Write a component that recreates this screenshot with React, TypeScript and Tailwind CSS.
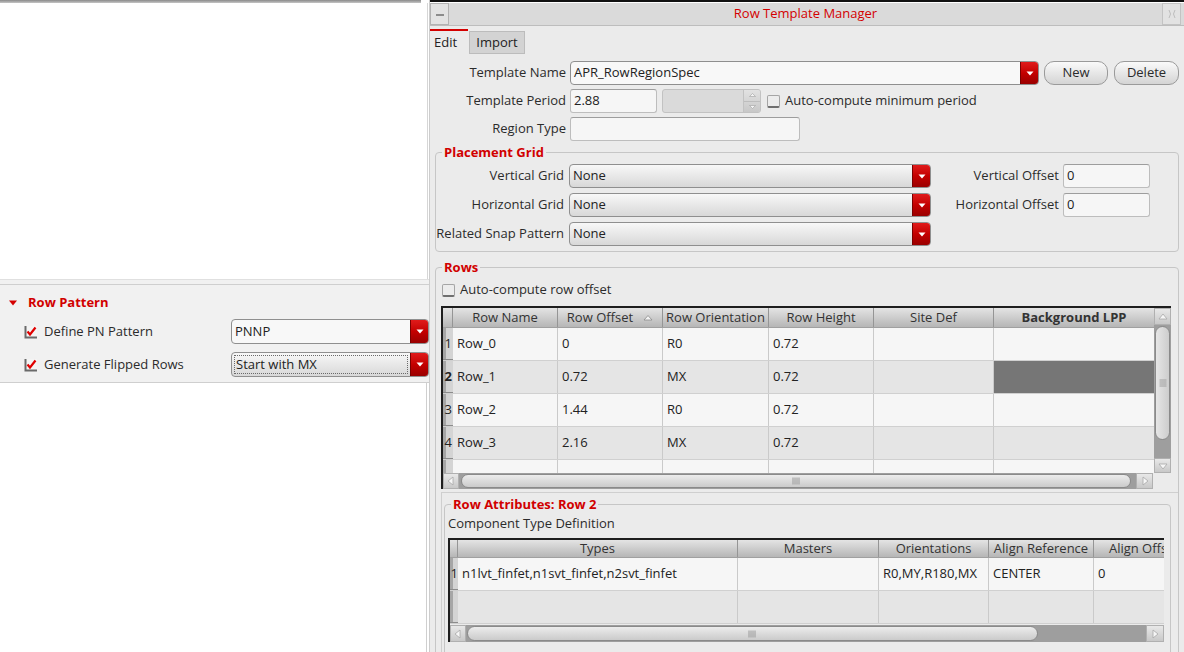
import React from "react";

function RedArrow() {
  return (
    <div className="w-[18px] shrink-0 flex items-center justify-center bg-linear-to-b from-[#e01a1a] via-[#c40000] to-[#9a0000] border-l border-[#7a0000]">
      <svg width="8" height="5" viewBox="0 0 8 5">
        <path d="M0.5 0.5 H7.5 L4 4.5Z" fill="#fff" />
      </svg>
    </div>
  );
}

function Combo({ className, value, gray, focus }: { className: string; value: string; gray?: boolean; focus?: boolean }) {
  return (
    <div
      className={
        "flex rounded-[4px] border border-[#8f8f8f] overflow-hidden shrink-0 " +
        (gray ? "bg-linear-to-b from-[#f8f8f8] to-[#d8d8d8] " : "bg-[#f8f8f8] ") +
        className
      }
    >
      {focus ? (
        <div className="flex-1 flex items-center m-[2px] border border-dotted border-[#6a6a6a] pl-[1px] text-[13px] text-[#222] whitespace-nowrap">
          {value}
        </div>
      ) : (
        <div className="flex-1 flex items-center pl-[3px] text-[13px] text-[#222] whitespace-nowrap">{value}</div>
      )}
      <RedArrow />
    </div>
  );
}

function Field({ className, value }: { className: string; value: string }) {
  return (
    <div
      className={
        "h-[24px] shrink-0 rounded-[3px] border border-[#bdbdbd] border-t-[#9d9d9d] bg-[#f6f6f6] flex items-center pl-[3px] text-[13px] text-[#222] " +
        className
      }
    >
      {value}
    </div>
  );
}

function RedCheck() {
  return (
    <svg width="14" height="14" viewBox="0 0 14 14" className="shrink-0">
      <rect x="1" y="1" width="12" height="12" fill="#f4f4f4" />
      <path d="M1.5 1 V12.5 H13" stroke="#6a6a6a" strokeWidth="2" fill="none" />
      <path d="M3.5 6.5 L6 9.5 L11.5 2.5" stroke="#e00000" strokeWidth="2.2" fill="none" />
    </svg>
  );
}

function EmptyCheck() {
  return (
    <div className="w-[13px] h-[13px] shrink-0 rounded-[2px] border border-[#a5a5a5] border-b-[#6f6f6f] border-b-2 bg-[#ececec]" />
  );
}

function ArrowBtn({ dir, className }: { dir: "up" | "down" | "left" | "right"; className: string }) {
  const d =
    dir === "up"
      ? "M2 8 L6 3 L10 8Z"
      : dir === "down"
      ? "M2 4 L6 9 L10 4Z"
      : dir === "left"
      ? "M8 2 L3 6 L8 10Z"
      : "M4 2 L9 6 L4 10Z";
  return (
    <div
      className={
        "shrink-0 flex items-center justify-center bg-linear-to-b from-[#e8e8e8] to-[#c8c8c8] border border-[#b0b0b0] " +
        className
      }
    >
      <svg width="12" height="12" viewBox="0 0 12 12">
        <path d={d} fill="#f6f6f6" stroke="#a8a8a8" strokeWidth="0.8" />
      </svg>
    </div>
  );
}

function GripV() {
  return (
    <svg width="9" height="8" viewBox="0 0 9 8">
      <path d="M1 0.5 V7.5 M3 0.5 V7.5 M5 0.5 V7.5 M7 0.5 V7.5" stroke="#9a9a9a" strokeWidth="1" />
    </svg>
  );
}

function GripH() {
  return (
    <svg width="8" height="9" viewBox="0 0 8 9">
      <path d="M0.5 1 H7.5 M0.5 3 H7.5 M0.5 5 H7.5 M0.5 7 H7.5" stroke="#a0a0a0" strokeWidth="1" />
    </svg>
  );
}

function HeadCell({ w, label, bold, sort, last }: { w: string; label: string; bold?: boolean; sort?: boolean; last?: boolean }) {
  return (
    <div
      className={
        "shrink-0 h-full flex items-center justify-center relative whitespace-nowrap overflow-hidden text-[13px] text-[#333] " +
        (last ? "" : "border-r border-[#959595] ") +
        (bold ? "font-bold text-[#1a1a1a] " : "") +
        w
      }
    >
      {label}
      {sort ? (
        <svg width="10" height="7" viewBox="0 0 10 7" className="ml-[10px]">
          <path d="M1 6 L5 1.5 L9 6Z" fill="#f2f2f2" stroke="#8a8a8a" strokeWidth="0.8" />
        </svg>
      ) : null}
    </div>
  );
}

const rowCols = [
  { w: "w-[105px]", label: "Row Name" },
  { w: "w-[105px]", label: "Row Offset", sort: true },
  { w: "w-[106px]", label: "Row Orientation" },
  { w: "w-[105px]", label: "Row Height" },
  { w: "w-[120px]", label: "Site Def" },
  { w: "w-[160px]", label: "Background LPP", bold: true },
];

const rowData = [
  ["Row_0", "0", "R0", "0.72", "", ""],
  ["Row_1", "0.72", "MX", "0.72", "", ""],
  ["Row_2", "1.44", "R0", "0.72", "", ""],
  ["Row_3", "2.16", "MX", "0.72", "", ""],
];

const attrCols = [
  { w: "w-[280px]", label: "Types" },
  { w: "w-[141px]", label: "Masters" },
  { w: "w-[110px]", label: "Orientations" },
  { w: "w-[105px]", label: "Align Reference" },
  { w: "w-[100px]", label: "Align Offset" },
];

const attrData = [
  ["n1lvt_finfet,n1svt_finfet,n2svt_finfet", "", "R0,MY,R180,MX", "CENTER", "0"],
  ["", "", "", "", ""],
];

function RowsTable() {
  return (
    <div className="w-[730px] ml-[5px] mt-[8px] border-t-2 border-l-2 border-[#1e1e1e] flex flex-col">
      <div className="flex">
        <div className="w-[711px] flex flex-col">
          <div className="h-[20px] shrink-0 flex bg-linear-to-b from-[#e4e4e4] to-[#b6b6b6] border-b border-[#a0a0a0]">
            <div className="w-[10px] shrink-0 border-r border-[#959595]" />
            {rowCols.map((c, i) => (
              <HeadCell key={i} w={c.w} label={c.label} bold={c.bold} sort={c.sort} last={i === rowCols.length - 1} />
            ))}
          </div>
          {rowData.map((r, ri) => (
            <div
              key={ri}
              className={
                "h-[33px] shrink-0 flex border-b border-[#d0d0d0] " + (ri % 2 === 1 ? "bg-[#e5e5e5]" : "bg-[#f6f6f6]")
              }
            >
              <div
                className={
                  "w-[10px] shrink-0 flex items-center justify-end pr-[1px] text-[13px] text-[#222] bg-linear-to-r from-[#a6a6a6] from-30% to-[#d4d4d4] to-30% border-b border-[#8c8c8c] " +
                  (ri === 1 ? "font-bold" : "")
                }
              >
                {ri + 1}
              </div>
              {rowCols.map((c, ci) => (
                <div
                  key={ci}
                  className={
                    "shrink-0 flex items-center pl-[4px] text-[13px] text-[#222] " +
                    (ci === rowCols.length - 1 ? "" : "border-r border-[#cacaca] ") +
                    (ri === 1 && ci === 5 ? "bg-[#767676] " : "") +
                    c.w
                  }
                >
                  {r[ci]}
                </div>
              ))}
            </div>
          ))}
          <div className="h-[13px] shrink-0 flex bg-[#f6f6f6]">
            <div className="w-[10px] shrink-0 bg-linear-to-r from-[#a6a6a6] from-30% to-[#d4d4d4] to-30%" />
            {rowCols.map((c, ci) => (
              <div
                key={ci}
                className={"shrink-0 " + (ci === rowCols.length - 1 ? "" : "border-r border-[#cacaca] ") + c.w}
              />
            ))}
          </div>
        </div>
        <div className="w-[17px] h-[165px] flex flex-col">
          <ArrowBtn dir="up" className="h-[17px] w-[17px]" />
          <div className="flex-1 bg-[#9e9e9e] px-[1px] pt-[1px]">
            <div className="h-[114px] rounded-full border border-[#8a8a8a] bg-linear-to-r from-[#e6e6e6] to-[#cdcdcd] flex items-center justify-center">
              <GripH />
            </div>
          </div>
          <ArrowBtn dir="down" className="h-[15px] w-[17px]" />
        </div>
      </div>
      <div className="h-[16px] shrink-0 flex">
        <ArrowBtn dir="left" className="w-[16px] h-[16px]" />
        <div className="w-[677px] shrink-0 bg-[#9e9e9e] py-[1px] pl-[2px]">
          <div className="w-[670px] h-full rounded-full border border-[#8a8a8a] bg-linear-to-b from-[#ececec] to-[#cbcbcb] flex items-center justify-center">
            <GripV />
          </div>
        </div>
        <ArrowBtn dir="right" className="w-[17px] h-[16px]" />
        <div className="w-[18px] shrink-0 bg-[#ebebeb]" />
      </div>
    </div>
  );
}

function AttrTable() {
  return (
    <div className="w-[716px] mt-[6px] ml-[3px] border-t-2 border-l-2 border-[#1e1e1e] flex flex-col overflow-hidden">
      <div className="h-[18px] shrink-0 flex bg-linear-to-b from-[#e4e4e4] to-[#b6b6b6] border-b border-[#a0a0a0]">
        <div className="w-[8px] shrink-0 border-r border-[#959595]" />
        {attrCols.map((c, i) => (
          <HeadCell key={i} w={c.w} label={c.label} last={i === attrCols.length - 1} />
        ))}
      </div>
      {attrData.map((r, ri) => (
        <div
          key={ri}
          className={"h-[33px] shrink-0 flex border-b border-[#d0d0d0] " + (ri % 2 === 1 ? "bg-[#e5e5e5]" : "bg-[#f6f6f6]")}
        >
          <div className="w-[8px] shrink-0 flex items-center justify-end text-[13px] text-[#222] bg-linear-to-r from-[#a6a6a6] from-40% to-[#d4d4d4] to-40% border-b border-[#8c8c8c]">
            {ri === 0 ? "1" : ""}
          </div>
          {attrCols.map((c, ci) => (
            <div
              key={ci}
              className={
                "shrink-0 flex items-center pl-[4px] whitespace-nowrap text-[13px] text-[#222] border-r border-[#cacaca] " +
                c.w
              }
            >
              {r[ci]}
            </div>
          ))}
        </div>
      ))}
      <div className="h-[17px] shrink-0 flex mt-[1px]">
        <ArrowBtn dir="left" className="w-[16px] h-[17px]" />
        <div className="w-[680px] shrink-0 bg-[#9e9e9e] py-[1px] pl-[1px]">
          <div className="w-[571px] h-full rounded-full border border-[#8a8a8a] bg-linear-to-b from-[#ececec] to-[#cbcbcb] flex items-center justify-center">
            <GripV />
          </div>
        </div>
        <ArrowBtn dir="right" className="w-[18px] h-[17px]" />
      </div>
    </div>
  );
}

function LeftPanel() {
  return (
    <div className="w-[429px] shrink-0 flex flex-col bg-white">
      <div className="h-[3px] shrink-0 w-[421px] bg-linear-to-b from-[#8a8a8a] to-[#c6c6c6]" />
      <div className="h-[276px] shrink-0 w-[428px] border-r border-[#d6d6d6]" />
      <div className="shrink-0 bg-[#f1f1f1] border-t border-[#e0e0e0] pt-[4px]">
        <div className="border-t border-[#cfcfcf] pb-[5px] border-b">
          <div className="h-[24px] mt-[6px] flex items-center">
            <svg width="8" height="6" viewBox="0 0 8 6" className="ml-[9px]">
              <path d="M0 0.5 H8 L4 5.5Z" fill="#d40000" />
            </svg>
            <span className="ml-[11px] text-[13px] font-bold text-[#d10000]">Row Pattern</span>
          </div>
          <div className="h-[25px] mt-[4px] flex items-center">
            <div className="ml-[24px]">
              <RedCheck />
            </div>
            <span className="ml-[6px] w-[187px] text-[13px] text-[#2b2b2b]">Define PN Pattern</span>
            <Combo className="w-[198px] h-[25px]" value="PNNP" />
          </div>
          <div className="h-[25px] mt-[8px] flex items-center">
            <div className="ml-[24px]">
              <RedCheck />
            </div>
            <span className="ml-[6px] w-[187px] text-[13px] text-[#2b2b2b]">Generate Flipped Rows</span>
            <Combo className="w-[198px] h-[25px]" value="Start with MX" gray focus />
          </div>
        </div>
      </div>
      <div className="flex-1 w-[427px] border-r border-[#cfcfcf]" />
    </div>
  );
}

function Dialog() {
  return (
    <div className="w-[755px] shrink-0 flex flex-col bg-[#ebebeb] border-l border-[#cdcdcd] overflow-hidden">
      <div className="h-[3px] shrink-0 border-t-2 border-[#111] bg-white" />
      <div className="h-[23px] shrink-0 flex items-stretch bg-[#dadada] border-b border-[#bdbdbd]">
        <div className="w-[19px] shrink-0 border border-[#b3b3b3] bg-[#e3e3e3] flex items-center justify-center">
          <div className="w-[8px] h-[2px] bg-[#8c8c8c] mt-[2px]" />
        </div>
        <div className="flex-1 flex items-center justify-center text-[13px] text-[#d40000]">Row Template Manager</div>
        <div className="w-[19px] shrink-0 border border-[#c3c3c3] bg-[#e2e2e2] flex items-center justify-center mr-[3px]">
          <svg width="10" height="10" viewBox="0 0 10 10">
            <path d="M2 1 Q5 5 2 9 M8 1 Q5 5 8 9" stroke="#bdbdbd" strokeWidth="1" fill="none" />
          </svg>
        </div>
      </div>
      <div className="h-[29px] shrink-0 flex items-end">
        <div className="w-[38px] h-[26px] border-t-2 border-[#d40000] flex items-center pl-[4px] text-[13px] text-[#222]">
          Edit
        </div>
        <div className="w-[56px] h-[23px] ml-[1px] mb-[1px] bg-[#d3d3d3] border border-[#bcbcbc] flex items-center justify-center text-[13px] text-[#222]">
          Import
        </div>
      </div>
      <div className="shrink-0 flex flex-col pt-[6px] gap-[4px]">
        <div className="h-[24px] flex items-center">
          <div className="w-[136px] shrink-0 text-right text-[13px] text-[#2b2b2b]">Template Name</div>
          <Combo className="ml-[4px] w-[469px] h-[24px]" value="APR_RowRegionSpec" />
          <div className="ml-[5px] w-[64px] h-[24px] rounded-[10px] border border-[#9a9a9a] bg-linear-to-b from-[#fafafa] to-[#d4d4d4] flex items-center justify-center text-[13px] text-[#2b2b2b]">
            New
          </div>
          <div className="ml-[6px] w-[65px] h-[24px] rounded-[10px] border border-[#9a9a9a] bg-linear-to-b from-[#fafafa] to-[#d4d4d4] flex items-center justify-center text-[13px] text-[#2b2b2b]">
            Delete
          </div>
        </div>
        <div className="h-[24px] flex items-center">
          <div className="w-[136px] shrink-0 text-right text-[13px] text-[#2b2b2b]">Template Period</div>
          <Field className="ml-[4px] w-[87px]" value="2.88" />
          <div className="ml-[5px] w-[99px] h-[24px] rounded-[3px] border border-[#c2c2c2] bg-[#dadada] flex justify-end overflow-hidden">
            <div className="w-[17px] flex flex-col border-l border-[#c2c2c2] bg-linear-to-b from-[#e2e2e2] to-[#c8c8c8]">
              <div className="flex-1 flex items-center justify-center border-b border-[#bdbdbd]">
                <svg width="7" height="4" viewBox="0 0 7 4">
                  <path d="M0.5 3.5 L3.5 0.5 L6.5 3.5Z" fill="#f4f4f4" stroke="#a0a0a0" strokeWidth="0.6" />
                </svg>
              </div>
              <div className="flex-1 flex items-center justify-center">
                <svg width="7" height="4" viewBox="0 0 7 4">
                  <path d="M0.5 0.5 L3.5 3.5 L6.5 0.5Z" fill="#f4f4f4" stroke="#a0a0a0" strokeWidth="0.6" />
                </svg>
              </div>
            </div>
          </div>
          <div className="ml-[6px]">
            <EmptyCheck />
          </div>
          <span className="ml-[5px] text-[13px] text-[#2b2b2b]">Auto-compute minimum period</span>
        </div>
        <div className="h-[24px] flex items-center">
          <div className="w-[136px] shrink-0 text-right text-[13px] text-[#2b2b2b]">Region Type</div>
          <Field className="ml-[4px] w-[230px]" value="" />
        </div>
      </div>

      <fieldset className="shrink-0 mt-[2px] ml-[5px] w-[744px] border border-[#c6c6c6] rounded-[4px] pt-[3px] pb-[5px]">
        <legend className="ml-[6px] px-[2px] text-[13px] font-bold text-[#d10000] leading-[18px]">Placement Grid</legend>
        <div className="flex flex-col gap-[5px]">
          <div className="h-[24px] flex items-center">
            <div className="w-[128px] shrink-0 text-right text-[13px] text-[#2b2b2b]">Vertical Grid</div>
            <Combo className="ml-[5px] w-[362px] h-[24px]" value="None" gray />
            <div className="w-[128px] shrink-0 text-right text-[13px] text-[#2b2b2b]">Vertical Offset</div>
            <Field className="ml-[4px] w-[87px]" value="0" />
          </div>
          <div className="h-[24px] flex items-center">
            <div className="w-[128px] shrink-0 text-right text-[13px] text-[#2b2b2b]">Horizontal Grid</div>
            <Combo className="ml-[5px] w-[362px] h-[24px]" value="None" gray />
            <div className="w-[128px] shrink-0 text-right text-[13px] text-[#2b2b2b]">Horizontal Offset</div>
            <Field className="ml-[4px] w-[87px]" value="0" />
          </div>
          <div className="h-[24px] flex items-center">
            <div className="w-[128px] shrink-0 text-right text-[13px] text-[#2b2b2b] whitespace-nowrap">Related Snap Pattern</div>
            <Combo className="ml-[5px] w-[362px] h-[24px]" value="None" gray />
          </div>
        </div>
      </fieldset>

      <fieldset className="shrink-0 mt-[6px] ml-[5px] w-[744px] h-[420px] border border-[#c6c6c6] rounded-[4px]">
        <legend className="ml-[6px] px-[2px] text-[13px] font-bold text-[#d10000] leading-[18px]">Rows</legend>
        <div className="h-[16px] mt-[6px] flex items-center">
          <div className="ml-[6px]">
            <EmptyCheck />
          </div>
          <span className="ml-[5px] text-[13px] text-[#2b2b2b]">Auto-compute row offset</span>
        </div>
        <RowsTable />
        <div className="mt-[3px] ml-[5px] w-[737px] h-[200px] border-t border-l border-[#cfcfcf] pt-[2px]">
          <fieldset className="ml-[2px] w-[727px] h-[190px] border border-[#c6c6c6] rounded-[4px]">
            <legend className="ml-[6px] px-[2px] text-[13px] font-bold text-[#d10000] leading-[18px]">
              Row Attributes: Row 2
            </legend>
            <div className="mt-[3px] ml-[3px] h-[16px] flex items-center text-[13px] text-[#2b2b2b]">
              Component Type Definition
            </div>
            <AttrTable />
          </fieldset>
        </div>
      </fieldset>
    </div>
  );
}

export default function App() {
  return (
    <div className="w-[1184px] h-[652px] flex bg-white overflow-hidden font-['Open_Sans',sans-serif]">
      <LeftPanel />
      <Dialog />
    </div>
  );
}
